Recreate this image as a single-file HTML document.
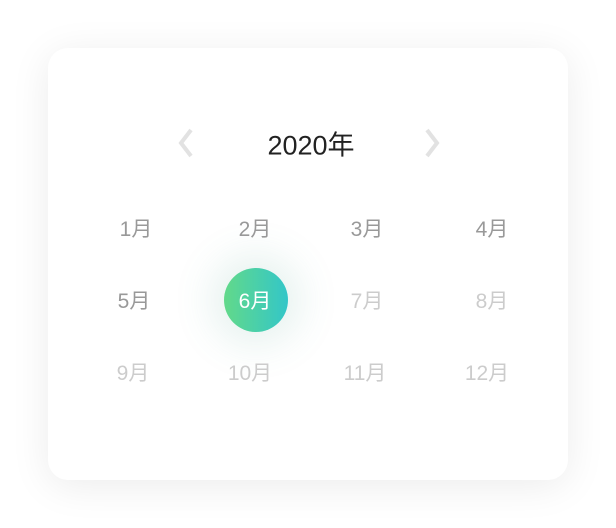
<!DOCTYPE html>
<html><head><meta charset="utf-8"><style>
body{margin:0;width:616px;height:528px;background:#fff;position:relative;overflow:hidden;font-family:"Liberation Sans","Noto Sans CJK SC",sans-serif}
.card{position:absolute;left:48px;top:48px;width:520px;height:432px;background:#fff;border-radius:20px;box-shadow:0 6px 40px rgba(0,0,0,0.08)}
.t{position:absolute;transform:translate(-50%,-50%);white-space:nowrap;font-size:21px}
.title{font-size:27px;color:#222}
.a{color:#999}.b{color:#ccc}
.c{position:absolute;left:224px;top:268px;width:64px;height:64px;border-radius:50%;background:linear-gradient(90deg,#62d98a,#33c6c8);box-shadow:0 0 40px 12px rgba(80,160,140,0.15)}
svg{position:absolute}
</style></head><body>
<div class="card"></div>
<svg style="left:176px;top:127px" width="20" height="32"><path d="M15 3 L5 16 L15 29" stroke="#e2e2e2" stroke-width="4" fill="none"/></svg>
<svg style="left:422px;top:127px" width="20" height="32"><path d="M5 3 L15 16 L5 29" stroke="#e2e2e2" stroke-width="4" fill="none"/></svg>
<div class="t title" style="left:311px;top:143px">2020年</div>
<div class="c"></div>
<div class="t a" style="left:136px;top:228px">1月</div>
<div class="t a" style="left:255px;top:228px">2月</div>
<div class="t a" style="left:367px;top:228px">3月</div>
<div class="t a" style="left:492px;top:228px">4月</div>
<div class="t a" style="left:134px;top:300px">5月</div>
<div class="t" style="left:255px;top:300px;color:#fff">6月</div>
<div class="t b" style="left:367px;top:300px">7月</div>
<div class="t b" style="left:492px;top:300px">8月</div>
<div class="t b" style="left:133px;top:372px">9月</div>
<div class="t b" style="left:250px;top:372px">10月</div>
<div class="t b" style="left:365px;top:372px">11月</div>
<div class="t b" style="left:487px;top:372px">12月</div>
</body></html>
